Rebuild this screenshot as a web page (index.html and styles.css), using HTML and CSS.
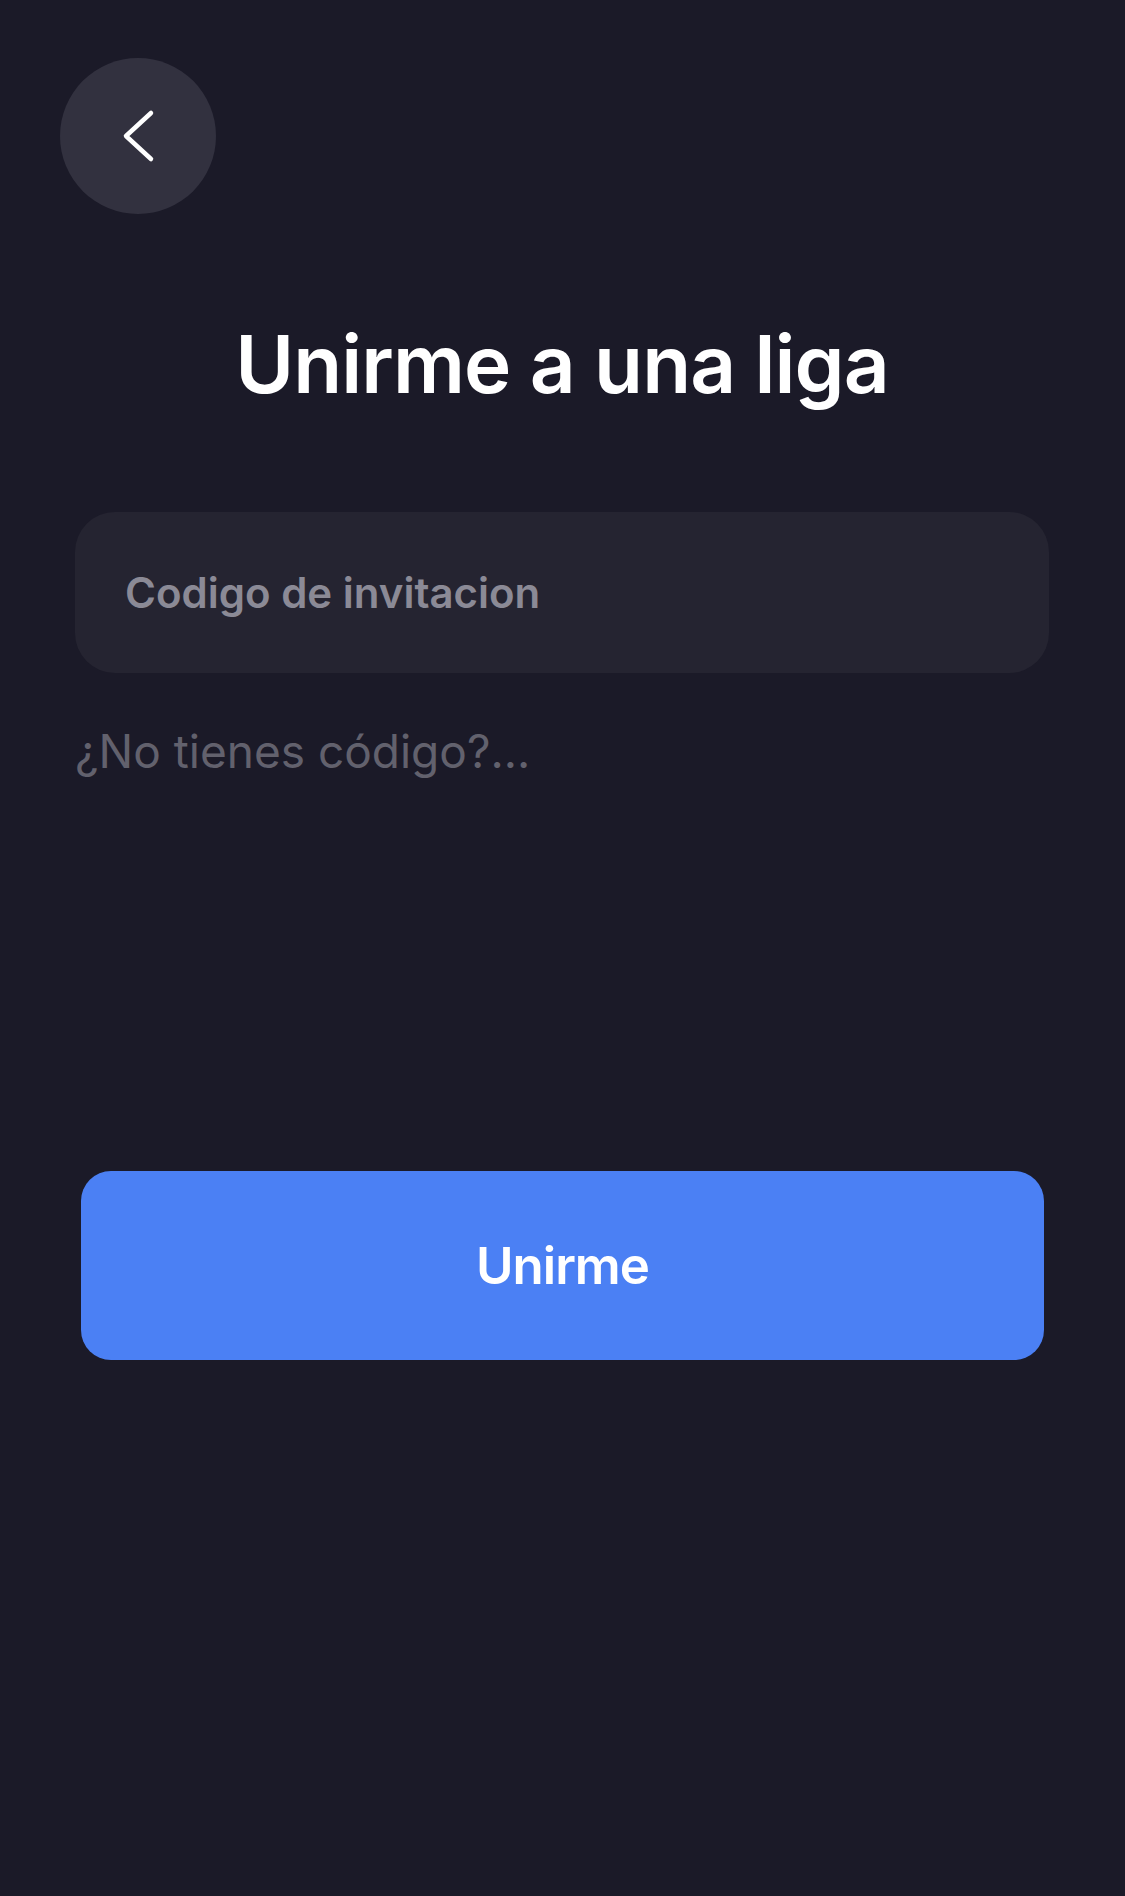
FILE: index.html
```html
<!DOCTYPE html>
<html lang="es">
<head>
  <meta charset="UTF-8" />
  <title>Unirme a una liga</title>
  <link rel="stylesheet" href="styles.css">
</head>
<body>
  <div class="screen">
    <button class="back" aria-label="Volver">
      <svg width="40" height="56" viewBox="0 0 40 56">
        <polyline points="35,5 10,28 35,51" fill="none" stroke="#fff" stroke-width="4.5" stroke-linecap="round" stroke-linejoin="round" />
      </svg>
    </button>

    <h1 class="title">Unirme a una liga</h1>

    <input type="text" class="code" placeholder="Codigo de invitacion" />

    <p class="hint">¿No tienes código?...</p>

    <button class="join">Unirme</button>
  </div>
</body>
</html>
```

FILE: styles.css
```css
body {
  margin: 0;
  background: #1b1a28;
  font-family: Inter, "Noto Sans", sans-serif;
  color: #fff;
}
.screen {
  min-height: 1896px;
  display: flex;
  flex-direction: column;
  padding: 58px 76px 0 75px;
  box-sizing: border-box;
}
.back {
  width: 156px;
  height: 156px;
  margin-left: -15px;
  border-radius: 50%;
  border: none;
  background: #32313f;
  display: flex;
  align-items: center;
  justify-content: center;
  padding: 0 4px 0 0;
  cursor: pointer;
}
.title {
  margin: 102px 0 0;
  font-size: 80px;
  line-height: 96px;
  font-weight: 600;
  text-align: center;
  letter-spacing: -0.9px;
}
.code {
  margin-top: 100px;
  height: 161px;
  box-sizing: border-box;
  border: none;
  border-radius: 40px;
  background: #252431;
  padding: 0 50px;
  font-family: inherit;
  font-size: 42px;
  font-weight: 600;
  color: #fff;
  outline: none;
}
.code::placeholder {
  color: #8b8a96;
}
.hint {
  margin: 50px 0 0;
  font-size: 46px;
  line-height: 56px;
  color: #62616d;
}
.join {
  margin: 392px 5px 0 6px;
  height: 189px;
  border: none;
  border-radius: 30px;
  background: #4b80f4;
  color: #fff;
  font-family: inherit;
  font-size: 51px;
  font-weight: 600;
  letter-spacing: -1px;
  cursor: pointer;
}
```
